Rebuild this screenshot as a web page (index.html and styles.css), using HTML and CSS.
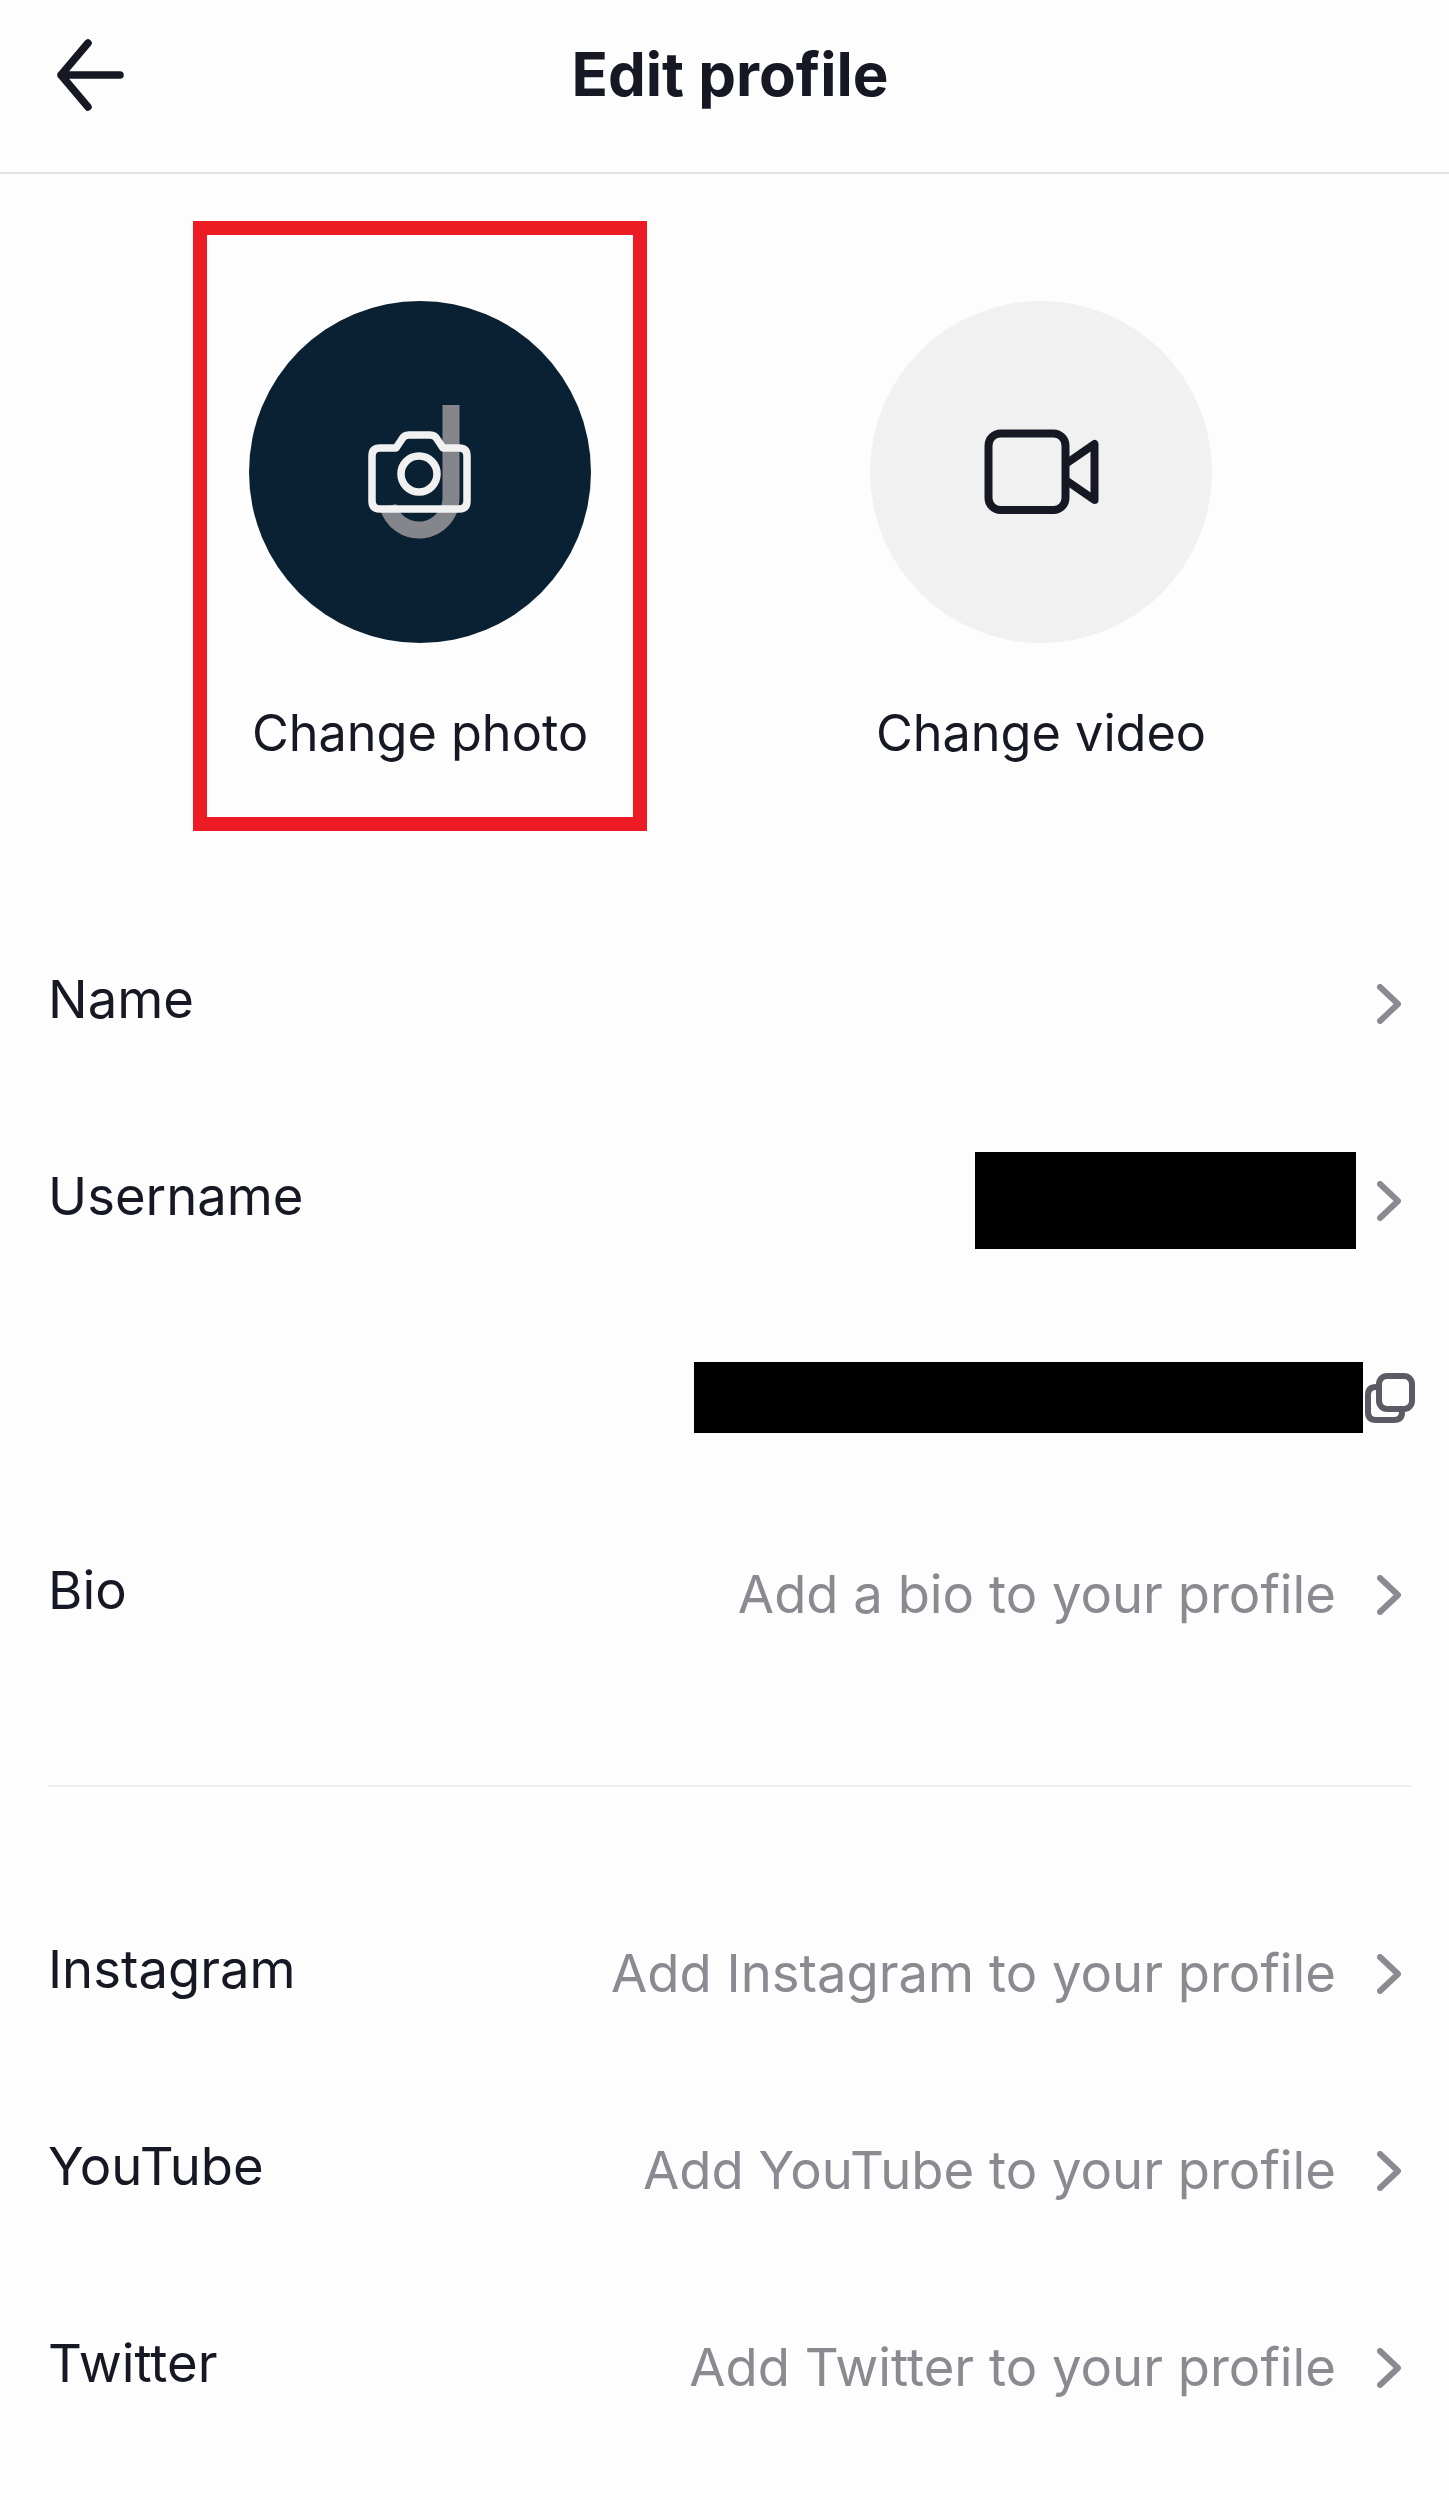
FILE: index.html
```html
<!DOCTYPE html>
<html lang="en">
<head>
    <meta charset="UTF-8">
    <meta name="viewport" content="width=device-width, initial-scale=1.0">
    <title>Edit profile</title>
    <link rel="stylesheet" href="styles.css">
</head>
<body>
    <!-- Header Section -->
    <header class="top-bar">
        <svg class="back-icon" viewBox="0 0 76 76" aria-hidden="true">
            <path d="M36 6 L9 38 L36 70 M9 38 H68" />
        </svg>
        <h1 class="page-title">Edit profile</h1>
    </header>

    <!-- Photo and video -->
    <section class="media-row">
        <div class="media-option selected">
            <div class="media-circle dark">
                <svg viewBox="0 0 342 342" aria-hidden="true">
                    <path class="logo-mark" d="M202 104 V197 A32 32 0 0 1 139 205" />
                    <path class="camera-line" d="M131 147 H147 L153 138 Q155 134 160 134 H181 Q186 134 188 138 L194 147 H210 Q218 147 218 155 V200 Q218 208 210 208 H131 Q123 208 123 200 V155 Q123 147 131 147 Z" />
                    <circle class="camera-line" cx="170" cy="173" r="18" />
                </svg>
            </div>
            <span class="media-label">Change photo</span>
        </div>
        <div class="media-option">
            <div class="media-circle light">
                <svg viewBox="0 0 342 342" aria-hidden="true">
                    <rect class="video-line" x="118.5" y="132.5" width="77" height="76.5" rx="12" />
                    <path class="video-line" d="M197 162 L224.5 143 V199 L197 180" />
                </svg>
            </div>
            <span class="media-label">Change video</span>
        </div>
    </section>

    <!-- Profile fields -->
    <section class="field-list">
        <div class="field-row">
            <span class="field-label">Name</span>
            <svg class="chevron" viewBox="0 0 24 40" aria-hidden="true"><path d="M3 3 L21 20 L3 37" /></svg>
        </div>
        <div class="field-row">
            <span class="field-label">Username</span>
            <div class="redacted username-block"></div>
            <svg class="chevron" viewBox="0 0 24 40" aria-hidden="true"><path d="M3 3 L21 20 L3 37" /></svg>
        </div>
        <div class="field-row link-row">
            <div class="redacted link-block"></div>
            <svg class="copy-icon" viewBox="0 0 50 50" aria-hidden="true">
                <rect x="14" y="3" width="33" height="33" rx="8" />
                <path d="M14 14 H11 Q3 14 3 22 V39 Q3 47 11 47 H29 Q37 47 37 39 V36" />
            </svg>
        </div>
        <div class="field-row">
            <span class="field-label">Bio</span>
            <span class="field-value">Add a bio to your profile</span>
            <svg class="chevron" viewBox="0 0 24 40" aria-hidden="true"><path d="M3 3 L21 20 L3 37" /></svg>
        </div>
    </section>

    <hr class="divider">

    <section class="field-list">
        <div class="field-row">
            <span class="field-label">Instagram</span>
            <span class="field-value">Add Instagram to your profile</span>
            <svg class="chevron" viewBox="0 0 24 40" aria-hidden="true"><path d="M3 3 L21 20 L3 37" /></svg>
        </div>
        <div class="field-row">
            <span class="field-label">YouTube</span>
            <span class="field-value">Add YouTube to your profile</span>
            <svg class="chevron" viewBox="0 0 24 40" aria-hidden="true"><path d="M3 3 L21 20 L3 37" /></svg>
        </div>
        <div class="field-row">
            <span class="field-label">Twitter</span>
            <span class="field-value">Add Twitter to your profile</span>
            <svg class="chevron" viewBox="0 0 24 40" aria-hidden="true"><path d="M3 3 L21 20 L3 37" /></svg>
        </div>
    </section>
</body>
</html>
```

FILE: styles.css
```css
body {
    margin: 0;
    height: 2500px;
    overflow: hidden;
    background-color: #fdfdfd;
    color: #161823;
    font-family: 'Inter', 'Liberation Sans', sans-serif;
}

/* Header Styles */
.top-bar {
    height: 172px;
    border-bottom: 2px solid #e3e3e4;
    display: grid;
    grid-template-columns: 1fr auto 1fr;
    align-items: center;
}

.back-icon {
    width: 76px;
    height: 76px;
    margin-left: 52px;
    margin-top: -22px;
    fill: none;
    stroke: #161823;
    stroke-width: 7.5;
    stroke-linecap: round;
    stroke-linejoin: round;
}

.page-title {
    margin: -24px 0 0 11px;
    font-size: 60px;
    font-weight: 700;
    line-height: 72px;
}

/* Photo and video */
.media-row {
    display: flex;
    gap: 167px;
    padding: 47px 0 0 193px;
}

.media-option {
    width: 454px;
    height: 610px;
    box-sizing: border-box;
    border: 14px solid transparent;
    padding-top: 66px;
    display: flex;
    flex-direction: column;
    align-items: center;
}

.media-option.selected {
    border-color: #ed1c24;
}

.media-circle {
    width: 342px;
    height: 342px;
    border-radius: 50%;
    flex-shrink: 0;
}

.media-circle svg {
    display: block;
}

.media-circle.dark {
    background-color: #0a2133;
}

.media-circle.light {
    background-color: #f1f1f2;
}

.logo-mark {
    fill: none;
    stroke: #85868c;
    stroke-width: 17;
}

.camera-line {
    fill: none;
    stroke: #f1f1f1;
    stroke-width: 7.5;
    stroke-linejoin: round;
}

.video-line {
    fill: none;
    stroke: #161823;
    stroke-width: 8;
    stroke-linejoin: round;
    stroke-linecap: round;
}

.media-label {
    margin-top: 60px;
    font-size: 50.4px;
    line-height: 60px;
}

/* Profile fields */
.field-list {
    display: flex;
    flex-direction: column;
}

.media-row + .field-list {
    margin-top: 74px;
}

.field-row {
    height: 197px;
    padding: 0 48px;
    display: flex;
    align-items: center;
    gap: 41px;
}

.field-label {
    margin-right: auto;
    margin-top: -10px;
    font-size: 52.6px;
    line-height: 60px;
}

.field-value {
    margin-top: -2px;
    color: #8a8b91;
    font-size: 52.6px;
    line-height: 60px;
}

.chevron {
    width: 24px;
    height: 40px;
    flex-shrink: 0;
    fill: none;
    stroke: #8a8b91;
    stroke-width: 6;
    stroke-linecap: round;
    stroke-linejoin: round;
}

.redacted {
    background-color: #000;
}

.username-block {
    width: 381px;
    height: 97px;
    margin-right: -20px;
}

.link-row {
    justify-content: flex-end;
    gap: 2px;
    padding-right: 34px;
}

.link-block {
    width: 669px;
    height: 71px;
}

.copy-icon {
    width: 50px;
    height: 50px;
    flex-shrink: 0;
    fill: none;
    stroke: #5b5c63;
    stroke-width: 6;
}

.divider {
    margin: 92px 37px 88px 48px;
    border: none;
    border-top: 2px solid #efeff0;
}
```
